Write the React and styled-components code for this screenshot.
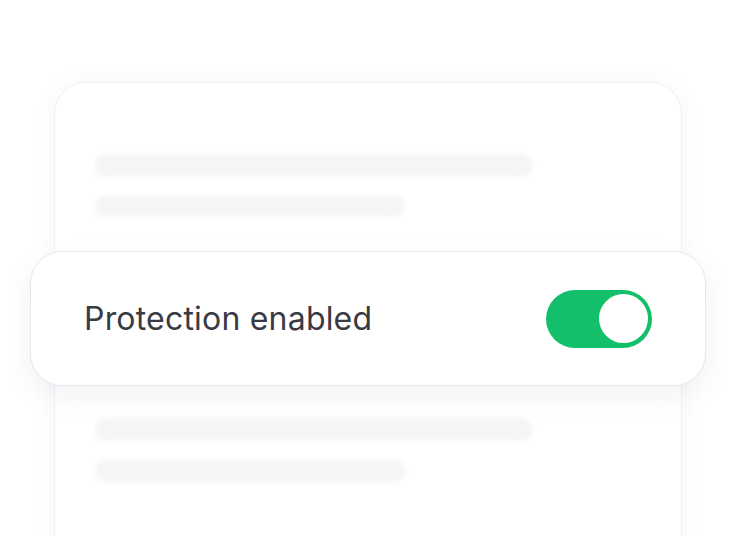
import React from "react";
import styled, { createGlobalStyle } from "styled-components";

const GlobalStyle = createGlobalStyle`
  html, body {
    margin: 0;
    padding: 0;
    background: #ffffff;
    overflow: hidden;
  }
  body {
    font-family: Inter, "Noto Sans", sans-serif;
  }
`;

const Stage = styled.main`
  width: 736px;
  height: 536px;
  overflow: hidden;
  padding: 82px 54px 0 54px;
  box-sizing: border-box;
`;

const BackCard = styled.section`
  background: #ffffff;
  border-radius: 32px 32px 0 0;
  border: 1px solid #f1f2f5;
  border-bottom: none;
  box-shadow: 0 0 24px rgba(20, 30, 60, 0.045);
  padding: 71px 41px 60px 40px;
  min-height: 520px;
  box-sizing: border-box;
  display: flex;
  flex-direction: column;
`;

const Lines = styled.div`
  display: flex;
  flex-direction: column;
  gap: 19px;
`;

const Bar = styled.div`
  height: ${(p) => p.h || 22}px;
  width: ${(p) => p.w}px;
  border-radius: 12px;
  background: #f4f5f7;
  filter: blur(2px);
`;

const Overlay = styled.div`
  margin: 34px -66px 32px -65px;
  height: 135px;
  box-sizing: border-box;
  background: #ffffff;
  border: 1px solid #e7e8ec;
  border-radius: 32px;
  box-shadow: 0 10px 30px rgba(20, 30, 60, 0.06);
  display: flex;
  align-items: center;
  justify-content: space-between;
  padding: 0 53px 0 53px;
`;

const Label = styled.span`
  font-family: Inter, "Noto Sans", sans-serif;
  font-size: 32px;
  font-weight: 400;
  color: #393a44;
  letter-spacing: 0.2px;
`;

const Track = styled.div`
  width: 106px;
  height: 58px;
  border-radius: 29px;
  background: #13bf6a;
  display: flex;
  align-items: center;
  justify-content: ${(p) => (p.on ? "flex-end" : "flex-start")};
  padding: 0 4px;
  box-sizing: border-box;
`;

const Knob = styled.div`
  width: 49px;
  height: 49px;
  border-radius: 50%;
  background: #ffffff;
`;

export default function App() {
  return (
    <>
      <GlobalStyle />
      <Stage>
        <BackCard>
          <Lines>
            <Bar w={437} h={23} />
            <Bar w={310} h={21} />
          </Lines>
          <Overlay>
            <Label>Protection enabled</Label>
            <Track on>
              <Knob />
            </Track>
          </Overlay>
          <Lines>
            <Bar w={437} h={23} />
            <Bar w={310} h={22} />
          </Lines>
        </BackCard>
      </Stage>
    </>
  );
}
